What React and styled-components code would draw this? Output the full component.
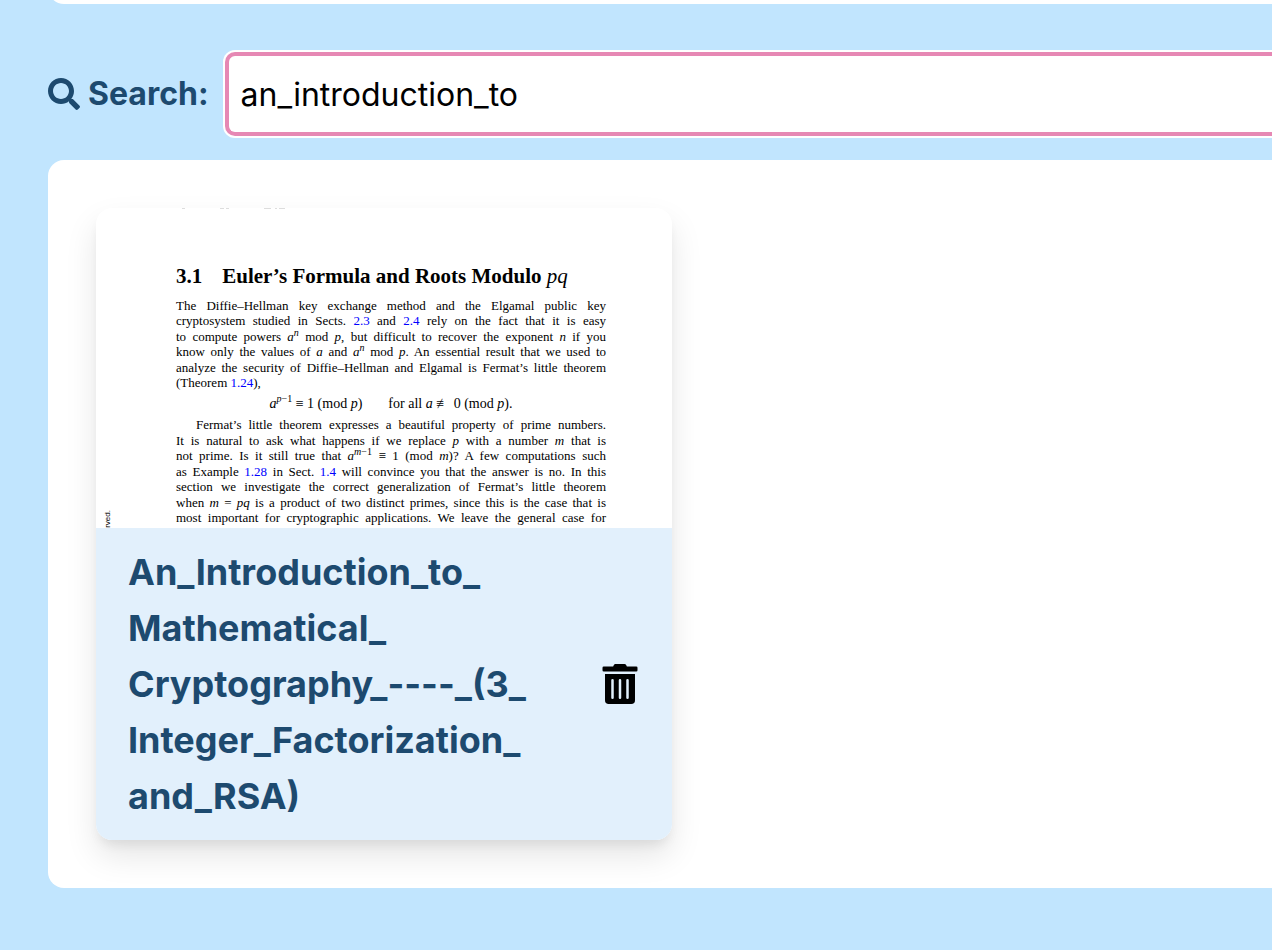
import React from "react";
import styled, { createGlobalStyle } from "styled-components";
import { FaSearch, FaTrashAlt } from "react-icons/fa";

const GlobalStyle = createGlobalStyle`
  * { box-sizing: border-box; }
  body {
    margin: 0;
    background: #c1e5fe;
    font-family: Inter, "Liberation Sans", sans-serif;
    color: #1d4a6f;
    overflow-x: hidden;
  }
`;

const Page = styled.main`
  min-height: 100vh;
  padding-left: 48px;
  padding-bottom: 48px;
`;

const UpperPanelEdge = styled.div`
  display: flex;
  align-items: flex-end;
  height: 4px;
  overflow: hidden;
`;

const UpperPanel = styled.div`
  flex: 1 0 auto;
  height: 32px;
  background: #fff;
  border-bottom-left-radius: 16px;
`;

const SearchRow = styled.form`
  display: flex;
  align-items: center;
  gap: 16px;
  margin: 48px 0 24px;
`;

const SearchLabel = styled.label`
  display: flex;
  align-items: center;
  gap: 8px;
  font-size: 32px;
  font-weight: 700;
  line-height: 48px;
`;

const SearchInput = styled.input`
  flex: 1;
  min-width: 0;
  height: 84px;
  padding: 0 12px;
  border: 4px solid #e688b4;
  border-right: 0;
  border-radius: 10px 0 0 10px;
  box-shadow: 0 0 0 2px #fff;
  outline: none;
  background: #fff;
  color: #000;
  font: 400 32px/48px Inter, "Liberation Sans", sans-serif;
`;

const Results = styled.section`
  display: flex;
  flex-wrap: wrap;
  padding: 48px;
  background: #fff;
  border-radius: 16px 0 0 16px;
`;

const Card = styled.article`
  width: 576px;
  max-width: 100%;
  border-radius: 16px;
  overflow: hidden;
  background: #fff;
  box-shadow: 0 16px 32px rgba(0, 0, 0, 0.1), 0 8px 12px -4px rgba(0, 0, 0, 0.08);
`;

const Preview = styled.div`
  display: grid;
  grid-template-columns: 72px 430px;
  padding-left: 8px;
  height: 320px;
  overflow: hidden;
  color: #000;
  font-family: "Liberation Serif", serif;
  font-size: 13px;
  line-height: 15px;
`;

const MarginNote = styled.span`
  align-self: end;
  justify-self: start;
  writing-mode: vertical-rl;
  transform: rotate(180deg);
  font: 8px/8px "Liberation Sans", sans-serif;
`;

const Sheet = styled.div`
  display: flex;
  flex-direction: column;
`;

const RunningHead = styled.svg`
  display: block;
  width: 120px;
  height: 2px;
  flex: none;
`;

const SheetHeading = styled.h3`
  display: flex;
  gap: 20px;
  margin: 54px 0 10px;
  font-size: 21px;
  line-height: 24px;
  font-weight: 700;
  white-space: nowrap;

  i { font-weight: 400; }
`;

const Paragraph = styled.div`
  display: flex;
  flex-direction: column;
  justify-content: space-between;
  height: ${(p) => (p.$lines === 7 ? 108 : 92)}px;
`;

const Line = styled.div`
  white-space: nowrap;
  text-align: justify;
  text-align-last: ${(p) => (p.$last ? "left" : "justify")};
  padding-left: ${(p) => (p.$indent ? 20 : 0)}px;
`;

const Formula = styled.div`
  display: flex;
  justify-content: center;
  gap: 26px;
  margin: 6px 0;
  font-size: 14px;
  white-space: nowrap;
`;

const Power = styled.sup`
  font-size: 10px;
  line-height: 0;
`;

const Ref = styled.span`
  color: #00f;
`;

const CardBody = styled.div`
  display: flex;
  align-items: center;
  justify-content: space-between;
  padding: 16px 32px;
  background: #e2f0fc;
`;

const Title = styled.h2`
  margin: 0;
  font-size: 36px;
  line-height: 56px;
  font-weight: 700;
`;

const TitleLine = styled.span`
  display: block;
`;

const DeleteButton = styled.button`
  display: flex;
  padding: 0;
  border: 0;
  background: none;
  color: #000;
  cursor: pointer;
`;

const titleLines = [
  "An_Introduction_to_",
  "Mathematical_",
  "Cryptography_----_(3_",
  "Integer_Factorization_",
  "and_RSA)",
];

function DocumentPreview() {
  return (
    <Preview>
      <MarginNote>rved.</MarginNote>
      <Sheet>
        <RunningHead viewBox="0 0 120 2" aria-hidden="true">
          <path d="M6 .5h3M44 .5h4M50 .5h3M88 .5h7M99 .5h2M103 .5h6" stroke="#ddd" fill="none" />
        </RunningHead>
        <SheetHeading>
          <span>3.1</span>
          <span>Euler’s Formula and Roots Modulo <i>pq</i></span>
        </SheetHeading>
        <Paragraph $lines={6}>
          <Line>The Diffie–Hellman key exchange method and the Elgamal public key</Line>
          <Line>cryptosystem studied in Sects. <Ref>2.3</Ref> and <Ref>2.4</Ref> rely on the fact that it is easy</Line>
          <Line>to compute powers <i>a</i><Power><i>n</i></Power> mod <i>p</i>, but difficult to recover the exponent <i>n</i> if you</Line>
          <Line>know only the values of <i>a</i> and <i>a</i><Power><i>n</i></Power> mod <i>p</i>. An essential result that we used to</Line>
          <Line>analyze the security of Diffie–Hellman and Elgamal is Fermat’s little theorem</Line>
          <Line $last>(Theorem <Ref>1.24</Ref>),</Line>
        </Paragraph>
        <Formula>
          <span><i>a</i><Power><i>p</i>−1</Power> ≡ 1 (mod <i>p</i>)</span>
          <span>for all <i>a</i> ≢ 0 (mod <i>p</i>).</span>
        </Formula>
        <Paragraph $lines={7}>
          <Line $indent>Fermat’s little theorem expresses a beautiful property of prime numbers.</Line>
          <Line>It is natural to ask what happens if we replace <i>p</i> with a number <i>m</i> that is</Line>
          <Line>not prime. Is it still true that <i>a</i><Power><i>m</i>−1</Power> ≡ 1 (mod <i>m</i>)? A few computations such</Line>
          <Line>as Example <Ref>1.28</Ref> in Sect. <Ref>1.4</Ref> will convince you that the answer is no. In this</Line>
          <Line>section we investigate the correct generalization of Fermat’s little theorem</Line>
          <Line>when <i>m</i> = <i>pq</i> is a product of two distinct primes, since this is the case that is</Line>
          <Line>most important for cryptographic applications. We leave the general case for</Line>
        </Paragraph>
      </Sheet>
    </Preview>
  );
}

export default function App() {
  return (
    <>
      <GlobalStyle />
      <Page>
        <UpperPanelEdge>
          <UpperPanel />
        </UpperPanelEdge>
        <SearchRow onSubmit={(e) => e.preventDefault()}>
          <SearchLabel htmlFor="search">
            <FaSearch size={32} aria-hidden="true" />
            Search:
          </SearchLabel>
          <SearchInput id="search" type="text" defaultValue="an_introduction_to" />
        </SearchRow>
        <Results>
          <Card>
            <DocumentPreview />
            <CardBody>
              <Title>
                {titleLines.map((line) => (
                  <TitleLine key={line}>{line}</TitleLine>
                ))}
              </Title>
              <DeleteButton type="button" aria-label="Delete document">
                <FaTrashAlt size={40} aria-hidden="true" />
              </DeleteButton>
            </CardBody>
          </Card>
        </Results>
      </Page>
    </>
  );
}
